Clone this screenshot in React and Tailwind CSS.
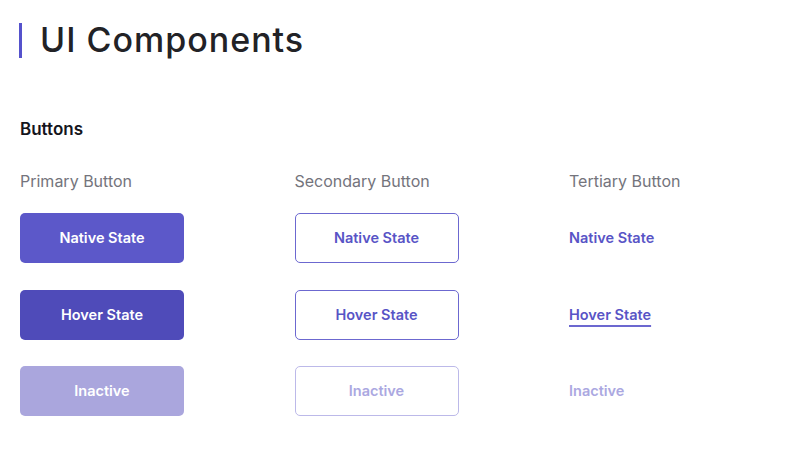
import React from 'react';

const font = { fontFamily: 'Inter, "Noto Sans", sans-serif' };

const columns = [
  { label: 'Primary Button', kind: 'primary' },
  { label: 'Secondary Button', kind: 'secondary' },
  { label: 'Tertiary Button', kind: 'tertiary' },
];

const states = ['Native State', 'Hover State', 'Inactive'];

const Btn = ({ kind, state }) => {
  const base = 'h-[50px] w-[164px] flex items-center justify-center rounded-[5px] text-[14.5px] font-semibold';
  if (kind === 'primary') {
    const bg = state === 'Native State' ? 'bg-[#5c58c9]' : state === 'Hover State' ? 'bg-[#4f4bb9]' : 'bg-[#aaa6dd]';
    return <div className={`${base} ${bg} text-white`}>{state}</div>;
  }
  if (kind === 'secondary') {
    const cls = state === 'Inactive'
      ? 'border-[#bcb9e9] text-[#aba8e1]'
      : 'border-[#6c68d0] text-[#5854c6]';
    return <div className={`${base} border-[1.5px] bg-white ${cls}`}>{state}</div>;
  }
  const cls = state === 'Inactive'
    ? 'text-[#aba8e1]'
    : state === 'Hover State'
      ? 'text-[#5854c6] underline decoration-[2px] underline-offset-[5px] decoration-[#6c68d0]'
      : 'text-[#5854c6]';
  return (
    <div className="h-[50px] flex items-center">
      <span className={`text-[14.5px] font-semibold ${cls}`}>{state}</span>
    </div>
  );
};

export default function App() {
  return (
    <div className="w-[800px] h-[465px] bg-white overflow-hidden" style={font}>
      <div className="flex items-center gap-[18px] pl-[19px] pt-[20px]">
        <div className="w-[3px] h-[35px] bg-[#5552cc]" />
        <h1 className="text-[34px] font-medium text-[#222226] leading-[40px] tracking-[1px]">UI Components</h1>
      </div>

      <h2 className="pl-5 mt-[57px] text-[17px] font-semibold text-[#15151c] leading-6">Buttons</h2>

      <div className="grid grid-cols-[274.5px_274.5px_1fr] pl-5 mt-[29px]">
        {columns.map((col) => (
          <div key={col.kind} className="flex flex-col">
            <div className="text-[16px] text-[#74747c] leading-[22px]">{col.label}</div>
            <div className="flex flex-col gap-[26.5px] mt-[21px]">
              {states.map((s) => (
                <Btn key={s} kind={col.kind} state={s} />
              ))}
            </div>
          </div>
        ))}
      </div>
    </div>
  );
}
